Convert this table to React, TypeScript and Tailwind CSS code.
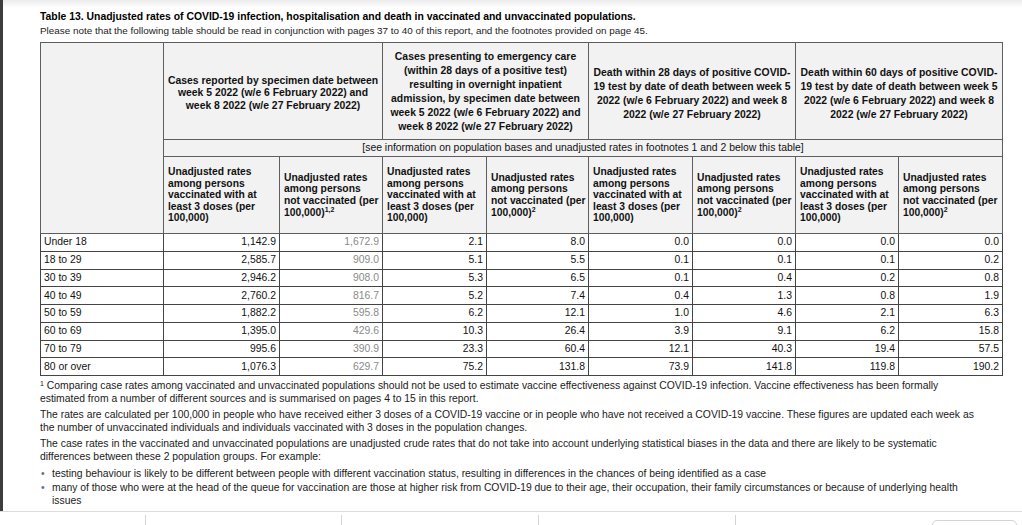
import React from "react";

const rows: [string, string[]][] = [
  ["Under 18", ["1,142.9", "1,672.9", "2.1", "8.0", "0.0", "0.0", "0.0", "0.0"]],
  ["18 to 29", ["2,585.7", "909.0", "5.1", "5.5", "0.1", "0.1", "0.1", "0.2"]],
  ["30 to 39", ["2,946.2", "908.0", "5.3", "6.5", "0.1", "0.4", "0.2", "0.8"]],
  ["40 to 49", ["2,760.2", "816.7", "5.2", "7.4", "0.4", "1.3", "0.8", "1.9"]],
  ["50 to 59", ["1,882.2", "595.8", "6.2", "12.1", "1.0", "4.6", "2.1", "6.3"]],
  ["60 to 69", ["1,395.0", "429.6", "10.3", "26.4", "3.9", "9.1", "6.2", "15.8"]],
  ["70 to 79", ["995.6", "390.9", "23.3", "60.4", "12.1", "40.3", "19.4", "57.5"]],
  ["80 or over", ["1,076.3", "629.7", "75.2", "131.8", "73.9", "141.8", "119.8", "190.2"]],
];

const Vacc = () => (
  <>
    Unadjusted rates
    <br />
    among persons
    <br />
    vaccinated with at
    <br />
    least 3 doses (per
    <br />
    100,000)
  </>
);

const Unvacc = ({ sup }: { sup: string }) => (
  <>
    Unadjusted rates
    <br />
    among persons
    <br />
    not vaccinated (per
    <br />
    100,000)<span className="relative -top-[4px] text-[7px] leading-none">{sup}</span>
  </>
);

export default function App() {
  const hd = "border border-[#5e5e5e] bg-[#f2f2f2] font-bold text-[10.4px] text-[#111] px-[4px] text-center whitespace-nowrap";
  const sub = "border border-[#5e5e5e] bg-[#f2f2f2] font-bold text-[10.3px] leading-[11.6px] text-[#111] px-[4px] text-left align-middle whitespace-nowrap";
  const td = "border border-[#444] text-[10.4px] leading-[12px] px-[3px] text-right text-[#111] whitespace-nowrap";
  return (
    <div className="w-[1022px] h-[525px] bg-white overflow-hidden" style={{ fontFamily: '"Liberation Sans", Arial, sans-serif' }}>
      <div className="flex h-[511px]">
        <div className="w-[3px] bg-[#3d3d3d] shrink-0" />
        <div className="flex-1 bg-gradient-to-b from-[#ececec] via-white to-white from-[0px] via-[8px] pl-[37px] pt-[10px]">
          <div className="text-[10.4px] font-bold leading-[14px] text-black whitespace-nowrap">
            Table 13. Unadjusted rates of COVID-19 infection, hospitalisation and death in vaccinated and unvaccinated populations.
          </div>
          <div className="text-[9.9px] leading-[14px] text-[#222] whitespace-nowrap">
            Please note that the following table should be read in conjunction with pages 37 to 40 of this report, and the footnotes provided on page 45.
          </div>
          <table className="mt-[4px] border-collapse table-fixed w-[962px]">
            <colgroup>
              <col className="w-[123px]" />
              <col className="w-[116px]" />
              <col className="w-[103px]" />
              <col className="w-[104px]" />
              <col className="w-[102px]" />
              <col className="w-[104px]" />
              <col className="w-[103px]" />
              <col className="w-[103px]" />
              <col className="w-[104px]" />
            </colgroup>
            <thead>
              <tr className="h-[97px]">
                <th rowSpan={3} className="border border-[#5e5e5e] bg-[#f2f2f2]" />
                <th colSpan={2} className={`${hd} leading-[12.4px] pt-[5px]`}>
                  Cases reported by specimen date between
                  <br />
                  week 5 2022 (w/e 6 February 2022) and
                  <br />
                  week 8 2022 (w/e 27 February 2022)
                </th>
                <th colSpan={2} className={`${hd} leading-[14px] pt-[1px]`}>
                  Cases presenting to emergency care
                  <br />
                  (within 28 days of a positive test)
                  <br />
                  resulting in overnight inpatient
                  <br />
                  admission, by specimen date between
                  <br />
                  week 5 2022 (w/e 6 February 2022) and
                  <br />
                  week 8 2022 (w/e 27 February 2022)
                </th>
                <th colSpan={2} className={`${hd} leading-[14px] pt-[5px]`}>
                  Death within 28 days of positive COVID-
                  <br />
                  19 test by date of death between week 5
                  <br />
                  2022 (w/e 6 February 2022) and week 8
                  <br />
                  2022 (w/e 27 February 2022)
                </th>
                <th colSpan={2} className={`${hd} leading-[14px] pt-[5px]`}>
                  Death within 60 days of positive COVID-
                  <br />
                  19 test by date of death between week 5
                  <br />
                  2022 (w/e 6 February 2022) and week 8
                  <br />
                  2022 (w/e 27 February 2022)
                </th>
              </tr>
              <tr className="h-[17px]">
                <td colSpan={8} className="border border-[#5e5e5e] bg-[#f2f2f2] text-[10.4px] leading-[12px] text-center text-[#111] whitespace-nowrap">
                  [see information on population bases and unadjusted rates in footnotes 1 and 2 below this table]
                </td>
              </tr>
              <tr className="h-[77px]">
                <th className={sub}><Vacc /></th>
                <th className={sub}><Unvacc sup="1,2" /></th>
                <th className={sub}><Vacc /></th>
                <th className={sub}><Unvacc sup="2" /></th>
                <th className={sub}><Vacc /></th>
                <th className={sub}><Unvacc sup="2" /></th>
                <th className={sub}><Vacc /></th>
                <th className={sub}><Unvacc sup="2" /></th>
              </tr>
            </thead>
            <tbody>
              {rows.map(([label, vals]) => (
                <tr key={label} className="h-[17.75px]">
                  <td className="border border-[#444] text-[10.4px] leading-[12px] px-[3px] text-left text-[#111] whitespace-nowrap">{label}</td>
                  {vals.map((v, i) => (
                    <td key={i} className={i === 1 ? `${td} !text-[#8a8a8a]` : td}>
                      {v}
                    </td>
                  ))}
                </tr>
              ))}
            </tbody>
          </table>
          <div className="mt-[4px] text-[10.37px] leading-[12.5px] text-[#1a1a1a] whitespace-nowrap">
            <p>
              <span className="relative -top-[3px] text-[7px] leading-none">1</span> Comparing case rates among vaccinated and unvaccinated populations should not be used to estimate vaccine effectiveness against COVID-19 infection. Vaccine effectiveness has been formally
              <br />
              estimated from a number of different sources and is summarised on pages 4 to 15 in this report.
            </p>
            <p className="mt-[4px]">
              The rates are calculated per 100,000 in people who have received either 3 doses of a COVID-19 vaccine or in people who have not received a COVID-19 vaccine. These figures are updated each week as
              <br />
              the number of unvaccinated individuals and individuals vaccinated with 3 doses in the population changes.
            </p>
            <p className="mt-[4px]">
              The case rates in the vaccinated and unvaccinated populations are unadjusted crude rates that do not take into account underlying statistical biases in the data and there are likely to be systematic
              <br />
              differences between these 2 population groups. For example:
            </p>
            <ul className="mt-[5px] flex flex-col gap-[1.5px]">
              <li className="flex">
                <span className="w-[12px] pl-[1px] text-[#5b6b8a] shrink-0">•</span>
                <span>testing behaviour is likely to be different between people with different vaccination status, resulting in differences in the chances of being identified as a case</span>
              </li>
              <li className="flex">
                <span className="w-[12px] pl-[1px] text-[#5b6b8a] shrink-0">•</span>
                <span>
                  many of those who were at the head of the queue for vaccination are those at higher risk from COVID-19 due to their age, their occupation, their family circumstances or because of underlying health
                  <br />
                  issues
                </span>
              </li>
            </ul>
          </div>
        </div>
      </div>
      <div className="h-[14px] border-t border-[#dcdcdc] flex relative">
        <div className="absolute left-[145px] top-[3px] h-[11px] w-px bg-[#d4d4d4]" />
        <div className="absolute left-[341px] top-[3px] h-[11px] w-px bg-[#d4d4d4]" />
        <div className="absolute left-[538px] top-[3px] h-[11px] w-px bg-[#d4d4d4]" />
        <div className="absolute left-[735px] top-[3px] h-[11px] w-px bg-[#d4d4d4]" />
        <div className="absolute left-[932px] top-[8px] h-[10px] w-[85px] rounded-[5px] border border-[#d4d4d4]" />
      </div>
    </div>
  );
}
